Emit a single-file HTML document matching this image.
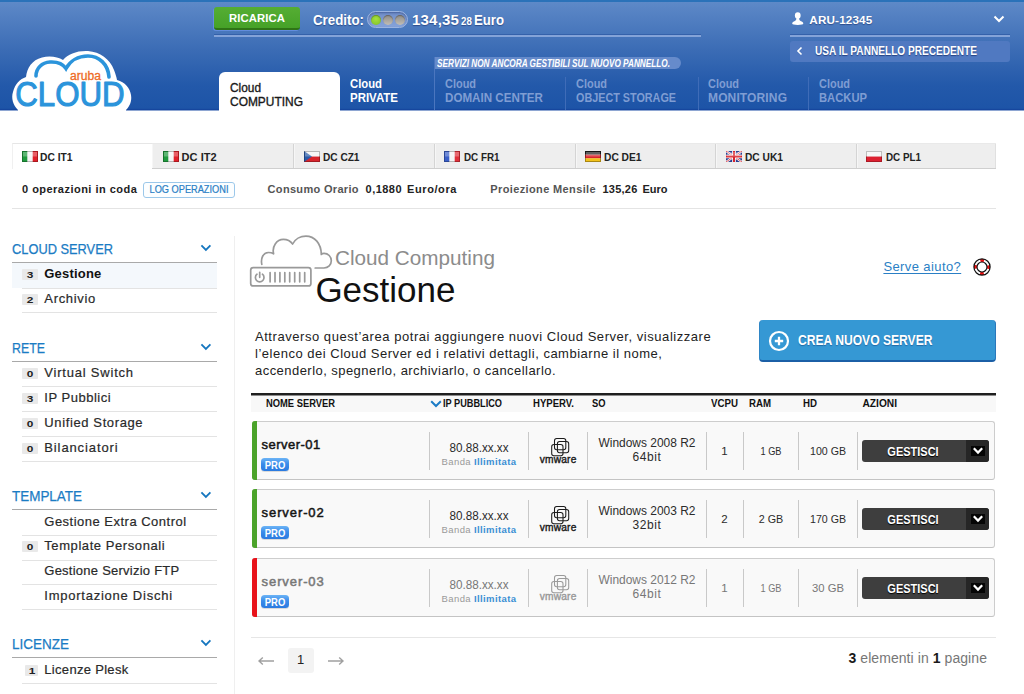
<!DOCTYPE html>
<html lang="it">
<head>
<meta charset="utf-8">
<title>Aruba Cloud - Gestione</title>
<style>
*{box-sizing:border-box;margin:0;padding:0}
html,body{width:1024px;height:694px;overflow:hidden;background:#fff}
body{font-family:"Liberation Sans",sans-serif;color:#222;position:relative}
.t{position:absolute;white-space:nowrap}
.a,svg{position:absolute}
#hdr{left:0;top:0;width:1024px;height:110px;background:linear-gradient(#5f8bc9 0,#5985c5 8px,#3b6cb5 50px,#2359aa 85px,#1d54a7 108px,#1a4ea3 109px,#123f99 110px);border-bottom:0}
#hdrb{left:0;top:110px;width:1024px;height:1px;background:#8ea6d2}
#hdrtop{left:0;top:0;width:1024px;height:2px;background:#2a72b9}
.hline{height:2px;background:#84a3d8;box-shadow:0 -1px 0 rgba(20,60,140,.35)}
.vsep{top:77px;width:1px;height:33px;background:#3f6cb8}
b{font-weight:bold}
</style>
</head>
<body>
<div class="a" id="hdr"></div><div class="a" id="hdrtop"></div><div class="a" id="hdrb"></div>
<svg style="left:8px;top:46px" width="128" height="65" viewBox="8 46 128 65">
<path d="M18 110 C13 105 11 98 13 92 C15 84 20 79 26 77 C27 68 32 60 42 57.500 C50 55.500 58 57 63 60 C68 54 77 50.500 88 51 C100 52 110 59 114 70 C115.500 74 116.500 77 117 80 C125 82 130 88 131 95 C132 101 130 106 126 110 L126 111 L18 111 Z" fill="#fff"/>
<path d="M36 76 C36 68 42 62.500 50 62 C57 61.600 63 64 66 68.500 C70 61 78 56 88 56 C99 56 108 64 109 77" fill="none" stroke="#2b94db" stroke-width="3.600" stroke-linecap="round"/>
<text x="70" y="80" font-family="Liberation Sans, sans-serif" font-size="12" fill="#ee6b25" stroke="#ee6b25" stroke-width="0.300" textLength="31" lengthAdjust="spacingAndGlyphs">aruba</text>
<text x="15.200" y="106" font-family="Liberation Sans, sans-serif" font-size="35" fill="#2b94db" stroke="#2b94db" stroke-width="1.100" stroke-linejoin="round" textLength="109.500" lengthAdjust="spacingAndGlyphs">CLOUD</text>
</svg>
<div class="a" style="left:214px;top:7px;width:86px;height:23px;background:linear-gradient(#55ad33,#46a228);border-radius:3px;border-bottom:2px solid #2f7416;box-shadow:-1px 1px 0 rgba(110,150,235,.7)"></div>
<div class="t" style="top:11.00px;font-size:11.3px;line-height:14px;color:#fff;font-weight:bold;letter-spacing:0.107px;left:-43.00px;width:600px;text-align:center;"><span>RICARICA</span></div>
<div class="t" style="top:11.00px;font-size:14px;line-height:18px;color:#fff;font-weight:bold;transform:scaleX(0.9502);transform-origin:0 0;left:313.00px;text-shadow:0 1px 1px rgba(10,30,90,.5);"><span>Credito:</span></div>
<div class="a" style="left:367px;top:11px;width:41px;height:17px;border-radius:9px;background:linear-gradient(#6f8dc8,#86a3da);border:1px solid #9bb4e1;box-shadow:inset 0 1px 2px rgba(20,40,100,.45)"></div>
<div class="a" style="left:370.5px;top:14.500px;width:10.400px;height:10.400px;border-radius:50%;background:radial-gradient(circle at 50% 40%,#a6e03c,#7fbf2a);box-shadow:inset 0 1px 1px rgba(0,0,0,.3)"></div>
<div class="a" style="left:382.8px;top:14.500px;width:10.400px;height:10.400px;border-radius:50%;background:linear-gradient(#8e8b86,#c2beb6);box-shadow:inset 0 1px 1px rgba(0,0,0,.3)"></div>
<div class="a" style="left:395.1px;top:14.500px;width:10.400px;height:10.400px;border-radius:50%;background:linear-gradient(#8e8b86,#c2beb6);box-shadow:inset 0 1px 1px rgba(0,0,0,.3)"></div>
<div class="t" style="top:10.00px;font-size:15px;line-height:19px;color:#fff;font-weight:bold;letter-spacing:0.217px;left:412.00px;text-shadow:0 1px 1px rgba(10,30,90,.5);"><span>134,35</span></div>
<div class="t" style="top:15.00px;font-size:10px;line-height:13px;color:#fff;font-weight:bold;transform:scaleX(0.9708);transform-origin:0 0;left:460.80px;text-shadow:0 1px 1px rgba(10,30,90,.5);"><span>28</span></div>
<div class="t" style="top:11.00px;font-size:14px;line-height:18px;color:#fff;font-weight:bold;transform:scaleX(0.9407);transform-origin:0 0;left:474.00px;text-shadow:0 1px 1px rgba(10,30,90,.5);"><span>Euro</span></div>
<div class="a hline" style="left:214px;top:35px;width:487px"></div><div class="a hline" style="left:790px;top:35px;width:220px"></div>
<svg style="left:791px;top:11px" width="14" height="15" viewBox="791 11 14 15"><ellipse cx="797.750" cy="15.500" rx="2.850" ry="3.300" fill="#fff"/><path d="M796.500 17.800C796.500 20 795.500 20.800 793.800 21.500C792.600 22 792.200 22.800 792.200 23.600C792.200 24.600 794.500 25 797.750 25C801 25 803.300 24.600 803.300 23.600C803.300 22.800 802.900 22 801.700 21.500C800 20.800 799 20 799 17.800Z" fill="#fff"/></svg>
<div class="t" style="top:12.00px;font-size:11.7px;line-height:15px;color:#fff;font-weight:bold;letter-spacing:0.157px;left:809.30px;text-shadow:0 1px 1px rgba(10,30,90,.5);"><span>ARU-12345</span></div>
<svg style="left:993px;top:15px" width="12" height="8" viewBox="0 0 12 8"><path d="M1.500 1.500L6 6l4.500-4.500" fill="none" stroke="#fff" stroke-width="2"/></svg>
<div class="a" style="left:790px;top:41px;width:220px;height:21px;background:#5079c1;border-radius:3px"></div>
<svg style="left:796px;top:46px" width="8" height="10" viewBox="0 0 8 10"><path d="M5.500 1.500L2 5l3.500 3.500" fill="none" stroke="#fff" stroke-width="1.600"/></svg>
<div class="t" style="top:43.00px;font-size:12px;line-height:16px;color:#fff;font-weight:bold;transform:scaleX(0.8417);transform-origin:0 0;left:815.00px;text-shadow:0 1px 1px rgba(10,30,90,.6);"><span>USA IL PANNELLO PRECEDENTE</span></div>
<div class="a" style="left:434px;top:57px;width:1px;height:53px;background:#4b76bf"></div>
<div class="a" style="left:435px;top:57px;width:246px;height:12px;border-radius:0 6px 6px 0;background:#668bcb"></div>
<div class="t" style="top:57.00px;font-size:10.3px;line-height:13px;color:#fff;font-weight:bold;transform:scaleX(0.7986);transform-origin:0 0;left:437.40px;font-style:italic;"><span>SERVIZI NON ANCORA GESTIBILI SUL NUOVO PANNELLO.</span></div>
<div class="a" style="left:219px;top:72px;width:121px;height:39px;background:#fff;border-radius:6px 6px 0 0"></div>
<div class="t" style="top:80.00px;font-size:12px;line-height:16px;color:#1a1a1a;transform:scaleX(0.9885);transform-origin:0 0;left:230.00px;-webkit-text-stroke:0.35px #1a1a1a;"><span>Cloud</span></div>
<div class="t" style="top:94.00px;font-size:12px;line-height:16px;color:#1a1a1a;transform:scaleX(0.9953);transform-origin:0 0;left:230.00px;-webkit-text-stroke:0.35px #1a1a1a;"><span>COMPUTING</span></div>
<div class="t" style="top:76.00px;font-size:12px;line-height:16px;color:#fff;font-weight:bold;transform:scaleX(0.9412);transform-origin:0 0;left:350.00px;"><span>Cloud</span></div>
<div class="t" style="top:90.00px;font-size:12px;line-height:16px;color:#fff;font-weight:bold;transform:scaleX(0.9555);transform-origin:0 0;left:350.00px;"><span>PRIVATE</span></div>
<div class="t" style="top:76.00px;font-size:12px;line-height:16px;color:#7f9dd3;font-weight:bold;transform:scaleX(0.9118);transform-origin:0 0;left:445.00px;"><span>Cloud</span></div>
<div class="t" style="top:90.00px;font-size:12px;line-height:16px;color:#7f9dd3;font-weight:bold;transform:scaleX(0.9670);transform-origin:0 0;left:445.00px;"><span>DOMAIN CENTER</span></div>
<div class="t" style="top:76.00px;font-size:12px;line-height:16px;color:#7f9dd3;font-weight:bold;transform:scaleX(0.9118);transform-origin:0 0;left:576.00px;"><span>Cloud</span></div>
<div class="t" style="top:90.00px;font-size:12px;line-height:16px;color:#7f9dd3;font-weight:bold;transform:scaleX(0.8998);transform-origin:0 0;left:576.00px;"><span>OBJECT STORAGE</span></div>
<div class="t" style="top:76.00px;font-size:12px;line-height:16px;color:#7f9dd3;font-weight:bold;transform:scaleX(0.9118);transform-origin:0 0;left:708.00px;"><span>Cloud</span></div>
<div class="t" style="top:90.00px;font-size:12px;line-height:16px;color:#7f9dd3;font-weight:bold;letter-spacing:0.133px;left:708.00px;"><span>MONITORING</span></div>
<div class="t" style="top:76.00px;font-size:12px;line-height:16px;color:#7f9dd3;font-weight:bold;transform:scaleX(0.9118);transform-origin:0 0;left:819.00px;"><span>Cloud</span></div>
<div class="t" style="top:90.00px;font-size:12px;line-height:16px;color:#7f9dd3;font-weight:bold;transform:scaleX(0.9349);transform-origin:0 0;left:819.00px;"><span>BACKUP</span></div>
<div class="a vsep" style="left:565px"></div>
<div class="a vsep" style="left:698px"></div>
<div class="a vsep" style="left:808px"></div>
<div class="a" style="left:12px;top:143px;width:984px;height:26px;background:#eeeeee;border-bottom:1px solid #cfcfcf;border-top:1px solid #e9e9e9"></div>
<div class="a" style="left:12px;top:143px;width:140px;height:26px;background:#fff;border-top:1px solid #e6e6e6;border-left:1px solid #f0f0f0"></div>
<div class="a" style="left:152px;top:144px;width:1px;height:24px;background:#f6f6f6"></div>
<div class="a" style="left:293px;top:144px;width:2px;height:24px;background:linear-gradient(90deg,#d4d4d4 50%,#f6f6f6 50%)"></div>
<div class="a" style="left:434px;top:144px;width:2px;height:24px;background:linear-gradient(90deg,#d4d4d4 50%,#f6f6f6 50%)"></div>
<div class="a" style="left:575px;top:144px;width:2px;height:24px;background:linear-gradient(90deg,#d4d4d4 50%,#f6f6f6 50%)"></div>
<div class="a" style="left:715px;top:144px;width:2px;height:24px;background:linear-gradient(90deg,#d4d4d4 50%,#f6f6f6 50%)"></div>
<div class="a" style="left:856px;top:144px;width:2px;height:24px;background:linear-gradient(90deg,#d4d4d4 50%,#f6f6f6 50%)"></div>
<div class="a" style="left:995px;top:144px;width:1px;height:24px;background:#e0e0e0"></div>
<svg style="left:22px;top:151px" width="16" height="11" viewBox="0 0 16 11"><rect width="16" height="11" fill="#f4f4f4"/><rect width="5.300" height="11" fill="#1f9a3d"/><rect x="10.700" width="5.300" height="11" fill="#e0202a"/><rect x=".5" y=".5" width="15" height="10" fill="none" stroke="rgba(0,0,0,.25)"/><rect x="1" y="1" width="14" height="4.500" fill="#fff" opacity=".28"/></svg>
<div class="t" style="top:150.00px;font-size:11px;line-height:14px;color:#222;font-weight:bold;transform:scaleX(0.9327);transform-origin:0 0;left:39.50px;"><span>DC IT1</span></div>
<svg style="left:163px;top:151px" width="16" height="11" viewBox="0 0 16 11"><rect width="16" height="11" fill="#f4f4f4"/><rect width="5.300" height="11" fill="#1f9a3d"/><rect x="10.700" width="5.300" height="11" fill="#e0202a"/><rect x=".5" y=".5" width="15" height="10" fill="none" stroke="rgba(0,0,0,.25)"/><rect x="1" y="1" width="14" height="4.500" fill="#fff" opacity=".28"/></svg>
<div class="t" style="top:150.00px;font-size:11px;line-height:14px;color:#222;font-weight:bold;letter-spacing:0.031px;left:181.60px;"><span>DC IT2</span></div>
<svg style="left:304px;top:151px" width="16" height="11" viewBox="0 0 16 11"><rect width="16" height="5.500" fill="#f4f4f4"/><rect y="5.500" width="16" height="5.500" fill="#d8242c"/><path d="M0 0L8 5.500L0 11Z" fill="#2a5aa8"/><rect x=".5" y=".5" width="15" height="10" fill="none" stroke="rgba(0,0,0,.25)"/><rect x="1" y="1" width="14" height="4.500" fill="#fff" opacity=".28"/></svg>
<div class="t" style="top:150.00px;font-size:11px;line-height:14px;color:#222;font-weight:bold;transform:scaleX(0.9186);transform-origin:0 0;left:322.60px;"><span>DC CZ1</span></div>
<svg style="left:444px;top:151px" width="16" height="11" viewBox="0 0 16 11"><rect width="16" height="11" fill="#f4f4f4"/><rect width="5.300" height="11" fill="#3a5fc8"/><rect x="10.700" width="5.300" height="11" fill="#e0303a"/><rect x=".5" y=".5" width="15" height="10" fill="none" stroke="rgba(0,0,0,.25)"/><rect x="1" y="1" width="14" height="4.500" fill="#fff" opacity=".28"/></svg>
<div class="t" style="top:150.00px;font-size:11px;line-height:14px;color:#222;font-weight:bold;transform:scaleX(0.8934);transform-origin:0 0;left:463.60px;"><span>DC FR1</span></div>
<svg style="left:585px;top:151px" width="16" height="11" viewBox="0 0 16 11"><rect width="16" height="3.700" fill="#222"/><rect y="3.700" width="16" height="3.700" fill="#d8242c"/><rect y="7.300" width="16" height="3.700" fill="#f2c21a"/><rect x=".5" y=".5" width="15" height="10" fill="none" stroke="rgba(0,0,0,.3)"/><rect x="1" y="1" width="14" height="4.500" fill="#fff" opacity=".28"/></svg>
<div class="t" style="top:150.00px;font-size:11px;line-height:14px;color:#222;font-weight:bold;transform:scaleX(0.9295);transform-origin:0 0;left:604.10px;"><span>DC DE1</span></div>
<svg style="left:726px;top:151px" width="16" height="11" viewBox="0 0 16 11"><rect width="16" height="11" fill="#2a3f8f"/><path d="M0 0L16 11M16 0L0 11" stroke="#fff" stroke-width="2.200"/><path d="M0 0L16 11M16 0L0 11" stroke="#d8242c" stroke-width=".8"/><path d="M8 0V11M0 5.500H16" stroke="#fff" stroke-width="3.600"/><path d="M8 0V11M0 5.500H16" stroke="#d8242c" stroke-width="2"/><rect x="1" y="1" width="14" height="4.500" fill="#fff" opacity=".28"/></svg>
<div class="t" style="top:150.00px;font-size:11px;line-height:14px;color:#222;font-weight:bold;transform:scaleX(0.9279);transform-origin:0 0;left:744.60px;"><span>DC UK1</span></div>
<svg style="left:866px;top:151px" width="16" height="11" viewBox="0 0 16 11"><rect width="16" height="5.500" fill="#f4f4f4"/><rect y="5.500" width="16" height="5.500" fill="#dc2030"/><rect x=".5" y=".5" width="15" height="10" fill="none" stroke="rgba(0,0,0,.22)"/><rect x="1" y="1" width="14" height="4.500" fill="#fff" opacity=".28"/></svg>
<div class="t" style="top:150.00px;font-size:11px;line-height:14px;color:#222;font-weight:bold;transform:scaleX(0.8946);transform-origin:0 0;left:885.60px;"><span>DC PL1</span></div>
<div class="t" style="top:182.00px;font-size:11px;line-height:14px;color:#222;font-weight:bold;letter-spacing:0.477px;left:22.00px;"><span>0 operazioni in coda</span></div>
<div class="a" style="left:143px;top:182px;width:92px;height:16px;border:1px solid #9cc8ea;border-radius:3px;background:#fcfeff"></div>
<div class="t" style="top:183.00px;font-size:10px;line-height:13px;color:#2a7fc5;transform:scaleX(0.9231);transform-origin:50% 0;left:-111.00px;width:600px;text-align:center;-webkit-text-stroke:0.2px #2a7fc5;"><span>LOG OPERAZIONI</span></div>
<div class="t" style="top:182.00px;font-size:11px;line-height:14px;color:#555;font-weight:bold;letter-spacing:0.317px;left:267.60px;"><span>Consumo Orario</span></div>
<div class="t" style="top:182.00px;font-size:11px;line-height:14px;color:#222;font-weight:bold;letter-spacing:0.459px;left:365.60px;"><span>0,1880</span></div>
<div class="t" style="top:182.00px;font-size:11px;line-height:14px;color:#222;font-weight:bold;letter-spacing:0.597px;left:407.00px;"><span>Euro/ora</span></div>
<div class="t" style="top:182.00px;font-size:11px;line-height:14px;color:#555;font-weight:bold;letter-spacing:0.373px;left:490.30px;"><span>Proiezione Mensile</span></div>
<div class="t" style="top:182.00px;font-size:11px;line-height:14px;color:#222;font-weight:bold;letter-spacing:0.263px;left:602.40px;"><span>135,26</span></div>
<div class="t" style="top:182.00px;font-size:11px;line-height:14px;color:#222;font-weight:bold;left:642.50px;"><span>Euro</span></div>
<div class="a" style="left:12px;top:208px;width:984px;height:1px;background:#e4e4e4"></div>
<div class="a" style="left:234px;top:236px;width:1px;height:458px;background:#efefef"></div>
<div class="t" style="top:240.00px;font-size:14px;line-height:18px;color:#1b7cc4;transform:scaleX(0.9164);transform-origin:0 0;left:12.00px;-webkit-text-stroke:0.25px #1b7cc4;"><span>CLOUD SERVER</span></div>
<svg style="left:200px;top:244px" width="12" height="8" viewBox="0 0 12 8"><path d="M1.400 1.300L5.900 5.900l4.500-4.600" fill="none" stroke="#1576bf" stroke-width="1.800"/></svg>
<div class="a" style="left:12px;top:262px;width:205px;height:1px;background:#a9a9a9"></div>
<div class="a" style="left:12px;top:263px;width:205px;height:25px;background:#f4f8fc"></div>
<div class="a" style="left:22px;top:288px;width:195px;height:1px;background:#e3e3e3"></div>
<div class="a" style="left:22px;top:269px;width:16px;height:11px;background:#e9e9e9;border-radius:1px"></div>
<div class="t" style="top:268.00px;font-size:9.5px;line-height:13px;color:#222;font-weight:bold;left:-270.00px;width:600px;text-align:center;transform:scaleX(1.25);transform-origin:50% 0;"><span>3</span></div>
<div class="t" style="top:265.00px;font-size:13px;line-height:17px;color:#111;font-weight:bold;letter-spacing:0.193px;left:44.30px;"><span>Gestione</span></div>
<div class="a" style="left:22px;top:312px;width:195px;height:1px;background:#e3e3e3"></div>
<div class="a" style="left:22px;top:294px;width:16px;height:11px;background:#e9e9e9;border-radius:1px"></div>
<div class="t" style="top:293.00px;font-size:9.5px;line-height:13px;color:#222;font-weight:bold;left:-270.00px;width:600px;text-align:center;transform:scaleX(1.25);transform-origin:50% 0;"><span>2</span></div>
<div class="t" style="top:290.00px;font-size:13px;line-height:17px;color:#2a2a2a;letter-spacing:0.665px;left:44.30px;-webkit-text-stroke:0.2px #2a2a2a;"><span>Archivio</span></div>
<div class="t" style="top:339.00px;font-size:14px;line-height:18px;color:#1b7cc4;transform:scaleX(0.8837);transform-origin:0 0;left:12.00px;-webkit-text-stroke:0.25px #1b7cc4;"><span>RETE</span></div>
<svg style="left:200px;top:343px" width="12" height="8" viewBox="0 0 12 8"><path d="M1.400 1.300L5.900 5.900l4.500-4.600" fill="none" stroke="#1576bf" stroke-width="1.800"/></svg>
<div class="a" style="left:12px;top:361px;width:205px;height:1px;background:#a9a9a9"></div>
<div class="a" style="left:22px;top:386px;width:195px;height:1px;background:#e3e3e3"></div>
<div class="a" style="left:22px;top:368px;width:16px;height:11px;background:#e9e9e9;border-radius:1px"></div>
<div class="t" style="top:367.00px;font-size:9.5px;line-height:13px;color:#222;font-weight:bold;left:-270.00px;width:600px;text-align:center;transform:scaleX(1.25);transform-origin:50% 0;"><span>0</span></div>
<div class="t" style="top:364.00px;font-size:13px;line-height:17px;color:#2a2a2a;letter-spacing:0.790px;left:44.30px;-webkit-text-stroke:0.2px #2a2a2a;"><span>Virtual Switch</span></div>
<div class="a" style="left:22px;top:411px;width:195px;height:1px;background:#e3e3e3"></div>
<div class="a" style="left:22px;top:393px;width:16px;height:11px;background:#e9e9e9;border-radius:1px"></div>
<div class="t" style="top:392.00px;font-size:9.5px;line-height:13px;color:#222;font-weight:bold;left:-270.00px;width:600px;text-align:center;transform:scaleX(1.25);transform-origin:50% 0;"><span>3</span></div>
<div class="t" style="top:389.00px;font-size:13px;line-height:17px;color:#2a2a2a;letter-spacing:0.521px;left:44.30px;-webkit-text-stroke:0.2px #2a2a2a;"><span>IP Pubblici</span></div>
<div class="a" style="left:22px;top:436px;width:195px;height:1px;background:#e3e3e3"></div>
<div class="a" style="left:22px;top:418px;width:16px;height:11px;background:#e9e9e9;border-radius:1px"></div>
<div class="t" style="top:417.00px;font-size:9.5px;line-height:13px;color:#222;font-weight:bold;left:-270.00px;width:600px;text-align:center;transform:scaleX(1.25);transform-origin:50% 0;"><span>0</span></div>
<div class="t" style="top:414.00px;font-size:13px;line-height:17px;color:#2a2a2a;letter-spacing:0.621px;left:44.30px;-webkit-text-stroke:0.2px #2a2a2a;"><span>Unified Storage</span></div>
<div class="a" style="left:22px;top:461px;width:195px;height:1px;background:#e3e3e3"></div>
<div class="a" style="left:22px;top:443px;width:16px;height:11px;background:#e9e9e9;border-radius:1px"></div>
<div class="t" style="top:442.00px;font-size:9.5px;line-height:13px;color:#222;font-weight:bold;left:-270.00px;width:600px;text-align:center;transform:scaleX(1.25);transform-origin:50% 0;"><span>0</span></div>
<div class="t" style="top:439.00px;font-size:13px;line-height:17px;color:#2a2a2a;letter-spacing:0.883px;left:44.30px;-webkit-text-stroke:0.2px #2a2a2a;"><span>Bilanciatori</span></div>
<div class="t" style="top:487.00px;font-size:14px;line-height:18px;color:#1b7cc4;transform:scaleX(0.9605);transform-origin:0 0;left:12.00px;-webkit-text-stroke:0.25px #1b7cc4;"><span>TEMPLATE</span></div>
<svg style="left:200px;top:491px" width="12" height="8" viewBox="0 0 12 8"><path d="M1.400 1.300L5.900 5.900l4.500-4.600" fill="none" stroke="#1576bf" stroke-width="1.800"/></svg>
<div class="a" style="left:12px;top:509px;width:205px;height:1px;background:#a9a9a9"></div>
<div class="a" style="left:22px;top:535px;width:195px;height:1px;background:#e3e3e3"></div>
<div class="t" style="top:513.00px;font-size:13px;line-height:17px;color:#2a2a2a;letter-spacing:0.489px;left:44.30px;-webkit-text-stroke:0.2px #2a2a2a;"><span>Gestione Extra Control</span></div>
<div class="a" style="left:22px;top:560px;width:195px;height:1px;background:#e3e3e3"></div>
<div class="a" style="left:22px;top:541px;width:16px;height:11px;background:#e9e9e9;border-radius:1px"></div>
<div class="t" style="top:540.00px;font-size:9.5px;line-height:13px;color:#222;font-weight:bold;left:-270.00px;width:600px;text-align:center;transform:scaleX(1.25);transform-origin:50% 0;"><span>0</span></div>
<div class="t" style="top:537.00px;font-size:13px;line-height:17px;color:#2a2a2a;letter-spacing:0.573px;left:44.30px;-webkit-text-stroke:0.2px #2a2a2a;"><span>Template Personali</span></div>
<div class="a" style="left:22px;top:584px;width:195px;height:1px;background:#e3e3e3"></div>
<div class="t" style="top:562.00px;font-size:13px;line-height:17px;color:#2a2a2a;letter-spacing:0.243px;left:44.30px;-webkit-text-stroke:0.2px #2a2a2a;"><span>Gestione Servizio FTP</span></div>
<div class="a" style="left:22px;top:609px;width:195px;height:1px;background:#e3e3e3"></div>
<div class="t" style="top:587.00px;font-size:13px;line-height:17px;color:#2a2a2a;letter-spacing:0.754px;left:44.30px;-webkit-text-stroke:0.2px #2a2a2a;"><span>Importazione Dischi</span></div>
<div class="t" style="top:635.00px;font-size:14px;line-height:18px;color:#1b7cc4;transform:scaleX(0.9641);transform-origin:0 0;left:12.00px;-webkit-text-stroke:0.25px #1b7cc4;"><span>LICENZE</span></div>
<svg style="left:200px;top:639px" width="12" height="8" viewBox="0 0 12 8"><path d="M1.400 1.300L5.900 5.900l4.500-4.600" fill="none" stroke="#1576bf" stroke-width="1.800"/></svg>
<div class="a" style="left:12px;top:657px;width:205px;height:1px;background:#a9a9a9"></div>
<div class="a" style="left:22px;top:683px;width:195px;height:1px;background:#e3e3e3"></div>
<div class="a" style="left:25px;top:665px;width:13px;height:11px;background:#e9e9e9;border-radius:1px"></div>
<div class="t" style="top:664.00px;font-size:9.5px;line-height:13px;color:#222;font-weight:bold;left:-268.50px;width:600px;text-align:center;transform:scaleX(1.25);transform-origin:50% 0;"><span>1</span></div>
<div class="t" style="top:661.00px;font-size:13px;line-height:17px;color:#2a2a2a;letter-spacing:0.309px;left:44.30px;-webkit-text-stroke:0.2px #2a2a2a;"><span>Licenze Plesk</span></div>
<svg style="left:246px;top:232px" width="90" height="58" viewBox="246 232 90 58" fill="none" stroke="#999" stroke-width="1.700" stroke-linecap="round" stroke-linejoin="round">
<path d="M261.800 264.300C260.600 258.500 263 252.600 268.500 252.500C270.500 252.500 272.300 253 273.600 253.800C271.800 246.500 276.500 239.500 283.400 239.400C287.300 239.400 290.600 241.200 292.600 244C295 239 300.500 236.100 305.900 236.100C314.500 236.100 321.300 243.500 321.300 254.500C322 253.600 323 253.400 324 253.400C328.200 253.400 331.300 256.600 331.300 260.800C331.300 265 328.200 268 324 268L315.200 268"/>
<rect x="250.700" y="267.700" width="60.200" height="18.200" rx="2.500"/>
<path d="M257 274.200A4.300 4.300 0 1 0 262.400 274.200M259.700 272.300V277.300"/>
<path d="M270.100 272.500V281.800M275 272.500V281.800M279.900 272.500V281.800M284.800 272.500V281.800M289.700 272.500V281.800M294.700 272.500V281.800M299.700 272.500V281.800M304.700 272.500V281.800" stroke-width="1.700"/>
</svg>
<div class="t" style="top:245.00px;font-size:21px;line-height:25px;color:#8c8c8c;transform:scaleX(0.9860);transform-origin:0 0;left:334.60px;"><span>Cloud Computing</span></div>
<div class="t" style="top:269.00px;font-size:35px;line-height:41px;color:#111;left:315.40px;"><span>Gestione</span></div>
<div class="t" style="top:258.00px;font-size:13px;line-height:17px;color:#2a7fc5;letter-spacing:0.401px;left:883.40px;text-decoration:underline;text-underline-offset:2px;"><span>Serve aiuto?</span></div>
<svg style="left:971.500px;top:256.700px" width="20" height="20" viewBox="0 0 20 20"><circle cx="10" cy="10" r="6.600" fill="none" stroke="#fff" stroke-width="3"/><circle cx="10" cy="10" r="6.600" fill="none" stroke="#f01010" stroke-width="3" stroke-dasharray="3.800 6.567" stroke-dashoffset="1.900"/><circle cx="10" cy="10" r="8.100" fill="none" stroke="#111" stroke-width="1.200"/><circle cx="10" cy="10" r="5" fill="none" stroke="#111" stroke-width="1.200"/></svg>
<div class="t" style="top:328.00px;font-size:13px;line-height:17px;color:#222;letter-spacing:0.546px;left:255.00px;"><span>Attraverso quest’area potrai aggiungere nuovi Cloud Server, visualizzare</span></div>
<div class="t" style="top:345.00px;font-size:13px;line-height:17px;color:#222;letter-spacing:0.507px;left:255.00px;"><span>l’elenco dei Cloud Server ed i relativi dettagli, cambiarne il nome,</span></div>
<div class="t" style="top:362.00px;font-size:13px;line-height:17px;color:#222;letter-spacing:0.456px;left:255.00px;"><span>accenderlo, spegnerlo, archiviarlo, o cancellarlo.</span></div>
<div class="a" style="left:759px;top:320px;width:237px;height:42px;background:#3598d4;border-radius:4px;border-bottom:2px solid #1b5fa6;border-right:1px solid #2a78bb;border-left:1px solid #2f86c6"></div>
<svg style="left:768px;top:330px" width="22" height="22" viewBox="0 0 22 22"><circle cx="11" cy="11" r="9" fill="none" stroke="#fff" stroke-width="2.200"/><path d="M11 6.800V15.200M6.800 11H15.200" stroke="#fff" stroke-width="2.300"/></svg>
<div class="t" style="top:331.00px;font-size:14.5px;line-height:18px;color:#fff;font-weight:bold;transform:scaleX(0.8346);transform-origin:0 0;left:798.00px;text-shadow:0 1px 1px rgba(10,50,110,.45);"><span>CREA NUOVO SERVER</span></div>
<div class="a" style="left:251px;top:393px;width:745px;height:2px;background:#1f1f1f"></div>
<div class="a" style="left:251px;top:395px;width:745px;height:17px;background:linear-gradient(#8c8c8c 0,#8c8c8c 1px,#f8f8f8 1px)"></div>
<div class="t" style="top:397.00px;font-size:10.2px;line-height:13px;color:#111;font-weight:bold;transform:scaleX(0.9187);transform-origin:0 0;left:266.40px;"><span>NOME SERVER</span></div>
<svg style="left:430px;top:400px" width="12" height="8" viewBox="0 0 12 8"><path d="M1.200 1.200L6 6l4.800-4.800" fill="none" stroke="#1c7cc6" stroke-width="2"/></svg>
<div class="t" style="top:397.00px;font-size:10.2px;line-height:13px;color:#111;font-weight:bold;transform:scaleX(0.9010);transform-origin:0 0;left:442.80px;"><span>IP PUBBLICO</span></div>
<div class="t" style="top:397.00px;font-size:10.2px;line-height:13px;color:#111;font-weight:bold;transform:scaleX(0.9402);transform-origin:0 0;left:533.00px;"><span>HYPERV.</span></div>
<div class="t" style="top:397.00px;font-size:10.2px;line-height:13px;color:#111;font-weight:bold;transform:scaleX(0.9162);transform-origin:0 0;left:592.00px;"><span>SO</span></div>
<div class="t" style="top:397.00px;font-size:10.2px;line-height:13px;color:#111;font-weight:bold;transform:scaleX(0.9536);transform-origin:0 0;left:710.70px;"><span>VCPU</span></div>
<div class="t" style="top:397.00px;font-size:10.2px;line-height:13px;color:#111;font-weight:bold;transform:scaleX(0.9481);transform-origin:0 0;left:749.00px;"><span>RAM</span></div>
<div class="t" style="top:397.00px;font-size:10.2px;line-height:13px;color:#111;font-weight:bold;transform:scaleX(0.9512);transform-origin:0 0;left:803.00px;"><span>HD</span></div>
<div class="t" style="top:397.00px;font-size:10.2px;line-height:13px;color:#111;font-weight:bold;left:862.50px;"><span>AZIONI</span></div>
<div class="a" style="left:252px;top:421px;width:743px;height:59px;background:#f9f9f9;border:1px solid #cdcdcd;border-bottom-color:#c4c4c4;border-radius:3px"></div>
<div class="a" style="left:252px;top:421px;width:5px;height:59px;background:#4ba32a;border-radius:3px 0 0 3px"></div>
<div class="t" style="top:436.00px;font-size:13px;line-height:17px;color:#151515;letter-spacing:0.475px;left:261.60px;-webkit-text-stroke:0.5px #151515;"><span>server-01</span></div>
<div class="a" style="left:261px;top:458px;width:27.500px;height:13px;border-radius:3.500px;background:linear-gradient(#6cb4f6,#3b8cea 45%,#2a7ae0);box-shadow:0 1px 0 rgba(0,0,0,.12)"></div>
<div class="t" style="top:459.00px;font-size:10px;line-height:13px;color:#fff;font-weight:bold;transform:scaleX(0.9459);transform-origin:50% 0;left:-25.20px;width:600px;text-align:center;"><span>PRO</span></div>
<div class="a" style="left:429px;top:432px;width:1px;height:38px;background:#c9c9c9"></div>
<div class="a" style="left:528px;top:432px;width:1px;height:38px;background:#c9c9c9"></div>
<div class="a" style="left:587px;top:432px;width:1px;height:38px;background:#c9c9c9"></div>
<div class="a" style="left:706px;top:432px;width:1px;height:38px;background:#c9c9c9"></div>
<div class="a" style="left:743px;top:432px;width:1px;height:38px;background:#c9c9c9"></div>
<div class="a" style="left:798px;top:432px;width:1px;height:38px;background:#c9c9c9"></div>
<div class="a" style="left:857px;top:432px;width:1px;height:38px;background:#c9c9c9"></div>
<div class="t" style="top:440.00px;font-size:12px;line-height:16px;color:#2b2b2b;transform:scaleX(0.9719);transform-origin:50% 0;left:179.00px;width:600px;text-align:center;"><span>80.88.xx.xx</span></div>
<div class="t" style="top:455.00px;font-size:9.5px;line-height:13px;color:#9a9a9a;letter-spacing:0.381px;left:179.00px;width:600px;text-align:center;"><span>Banda <b style="color:#3a8fd4">Illimitata</b></span></div>
<svg style="left:548px;top:435px" width="24" height="24" viewBox="548 14 24 24" fill="none" stroke="#1c1c1c" stroke-width="1.050"><rect x="554.500" y="17.500" width="11.300" height="11.300" rx="2.200"/><rect x="557.400" y="20.500" width="11.300" height="11.300" rx="2.200"/><rect x="551.700" y="23.500" width="11.300" height="11.300" rx="2.200"/></svg>
<div class="t" style="top:453.00px;font-size:10.2px;line-height:13px;color:#1c1c1c;letter-spacing:0.162px;left:258.20px;width:600px;text-align:center;-webkit-text-stroke:0.4px #1c1c1c;"><span>vmware</span></div>
<div class="t" style="top:435.00px;font-size:12px;line-height:16px;color:#2b2b2b;transform:scaleX(0.9960);transform-origin:50% 0;left:346.80px;width:600px;text-align:center;"><span>Windows 2008 R2</span></div>
<div class="t" style="top:449.00px;font-size:12px;line-height:16px;color:#2b2b2b;letter-spacing:0.605px;left:347.00px;width:600px;text-align:center;"><span>64bit</span></div>
<div class="t" style="top:444.00px;font-size:11.5px;line-height:14px;color:#2b2b2b;left:424.50px;width:600px;text-align:center;"><span>1</span></div>
<div class="t" style="top:444.00px;font-size:11.5px;line-height:14px;color:#2b2b2b;transform:scaleX(0.8010);transform-origin:50% 0;left:471.00px;width:600px;text-align:center;"><span>1 GB</span></div>
<div class="t" style="top:444.00px;font-size:11.5px;line-height:14px;color:#2b2b2b;transform:scaleX(0.9231);transform-origin:50% 0;left:527.50px;width:600px;text-align:center;"><span>100 GB</span></div>
<div class="a" style="left:861.500px;top:440px;width:127.500px;height:22px;background:#3e3e3e;border-radius:3px"></div>
<div class="a" style="left:966px;top:440px;width:23px;height:22px;background:#262626;border-radius:0 3px 3px 0"></div>
<div class="a" style="left:971px;top:446px;width:14px;height:10px;background:#050505"></div>
<svg style="left:971px;top:446px" width="14" height="10" viewBox="0 0 14 10"><path d="M2.800 2.300L7 6.600L11.200 2.300" fill="none" stroke="#fff" stroke-width="2.200"/></svg>
<div class="t" style="top:444.00px;font-size:12px;line-height:16px;color:#fff;font-weight:bold;transform:scaleX(0.9158);transform-origin:50% 0;left:613.20px;width:600px;text-align:center;text-shadow:0 1px 1px #000;"><span>GESTISCI</span></div>
<div class="a" style="left:252px;top:489px;width:743px;height:59px;background:#f9f9f9;border:1px solid #cdcdcd;border-bottom-color:#c4c4c4;border-radius:3px"></div>
<div class="a" style="left:252px;top:489px;width:5px;height:59px;background:#4ba32a;border-radius:3px 0 0 3px"></div>
<div class="t" style="top:504.00px;font-size:13px;line-height:17px;color:#151515;letter-spacing:0.904px;left:261.60px;-webkit-text-stroke:0.5px #151515;"><span>server-02</span></div>
<div class="a" style="left:261px;top:526px;width:27.500px;height:13px;border-radius:3.500px;background:linear-gradient(#6cb4f6,#3b8cea 45%,#2a7ae0);box-shadow:0 1px 0 rgba(0,0,0,.12)"></div>
<div class="t" style="top:527.00px;font-size:10px;line-height:13px;color:#fff;font-weight:bold;transform:scaleX(0.9459);transform-origin:50% 0;left:-25.20px;width:600px;text-align:center;"><span>PRO</span></div>
<div class="a" style="left:429px;top:500px;width:1px;height:38px;background:#c9c9c9"></div>
<div class="a" style="left:528px;top:500px;width:1px;height:38px;background:#c9c9c9"></div>
<div class="a" style="left:587px;top:500px;width:1px;height:38px;background:#c9c9c9"></div>
<div class="a" style="left:706px;top:500px;width:1px;height:38px;background:#c9c9c9"></div>
<div class="a" style="left:743px;top:500px;width:1px;height:38px;background:#c9c9c9"></div>
<div class="a" style="left:798px;top:500px;width:1px;height:38px;background:#c9c9c9"></div>
<div class="a" style="left:857px;top:500px;width:1px;height:38px;background:#c9c9c9"></div>
<div class="t" style="top:508.00px;font-size:12px;line-height:16px;color:#2b2b2b;transform:scaleX(0.9719);transform-origin:50% 0;left:179.00px;width:600px;text-align:center;"><span>80.88.xx.xx</span></div>
<div class="t" style="top:523.00px;font-size:9.5px;line-height:13px;color:#9a9a9a;letter-spacing:0.381px;left:179.00px;width:600px;text-align:center;"><span>Banda <b style="color:#3a8fd4">Illimitata</b></span></div>
<svg style="left:548px;top:503px" width="24" height="24" viewBox="548 14 24 24" fill="none" stroke="#1c1c1c" stroke-width="1.050"><rect x="554.500" y="17.500" width="11.300" height="11.300" rx="2.200"/><rect x="557.400" y="20.500" width="11.300" height="11.300" rx="2.200"/><rect x="551.700" y="23.500" width="11.300" height="11.300" rx="2.200"/></svg>
<div class="t" style="top:521.00px;font-size:10.2px;line-height:13px;color:#1c1c1c;letter-spacing:0.162px;left:258.20px;width:600px;text-align:center;-webkit-text-stroke:0.4px #1c1c1c;"><span>vmware</span></div>
<div class="t" style="top:503.00px;font-size:12px;line-height:16px;color:#2b2b2b;transform:scaleX(0.9960);transform-origin:50% 0;left:346.80px;width:600px;text-align:center;"><span>Windows 2003 R2</span></div>
<div class="t" style="top:517.00px;font-size:12px;line-height:16px;color:#2b2b2b;letter-spacing:0.605px;left:347.00px;width:600px;text-align:center;"><span>32bit</span></div>
<div class="t" style="top:512.00px;font-size:11.5px;line-height:14px;color:#2b2b2b;left:424.50px;width:600px;text-align:center;"><span>2</span></div>
<div class="t" style="top:512.00px;font-size:11.5px;line-height:14px;color:#2b2b2b;transform:scaleX(0.9344);transform-origin:50% 0;left:471.00px;width:600px;text-align:center;"><span>2 GB</span></div>
<div class="t" style="top:512.00px;font-size:11.5px;line-height:14px;color:#2b2b2b;transform:scaleX(0.9231);transform-origin:50% 0;left:527.50px;width:600px;text-align:center;"><span>170 GB</span></div>
<div class="a" style="left:861.500px;top:508px;width:127.500px;height:22px;background:#3e3e3e;border-radius:3px"></div>
<div class="a" style="left:966px;top:508px;width:23px;height:22px;background:#262626;border-radius:0 3px 3px 0"></div>
<div class="a" style="left:971px;top:514px;width:14px;height:10px;background:#050505"></div>
<svg style="left:971px;top:514px" width="14" height="10" viewBox="0 0 14 10"><path d="M2.800 2.300L7 6.600L11.200 2.300" fill="none" stroke="#fff" stroke-width="2.200"/></svg>
<div class="t" style="top:512.00px;font-size:12px;line-height:16px;color:#fff;font-weight:bold;transform:scaleX(0.9158);transform-origin:50% 0;left:613.20px;width:600px;text-align:center;text-shadow:0 1px 1px #000;"><span>GESTISCI</span></div>
<div class="a" style="left:252px;top:558px;width:743px;height:59px;background:#f9f9f9;border:1px solid #cdcdcd;border-bottom-color:#c4c4c4;border-radius:3px"></div>
<div class="a" style="left:252px;top:558px;width:5px;height:59px;background:#e8121a;border-radius:3px 0 0 3px"></div>
<div class="t" style="top:573.00px;font-size:13px;line-height:17px;color:#777;letter-spacing:0.904px;left:261.60px;-webkit-text-stroke:0.5px #777;"><span>server-03</span></div>
<div class="a" style="left:261px;top:595px;width:27.500px;height:13px;border-radius:3.500px;background:linear-gradient(#6cb4f6,#3b8cea 45%,#2a7ae0);box-shadow:0 1px 0 rgba(0,0,0,.12)"></div>
<div class="t" style="top:596.00px;font-size:10px;line-height:13px;color:#fff;font-weight:bold;transform:scaleX(0.9459);transform-origin:50% 0;left:-25.20px;width:600px;text-align:center;"><span>PRO</span></div>
<div class="a" style="left:429px;top:569px;width:1px;height:38px;background:#c9c9c9"></div>
<div class="a" style="left:528px;top:569px;width:1px;height:38px;background:#c9c9c9"></div>
<div class="a" style="left:587px;top:569px;width:1px;height:38px;background:#c9c9c9"></div>
<div class="a" style="left:706px;top:569px;width:1px;height:38px;background:#c9c9c9"></div>
<div class="a" style="left:743px;top:569px;width:1px;height:38px;background:#c9c9c9"></div>
<div class="a" style="left:798px;top:569px;width:1px;height:38px;background:#c9c9c9"></div>
<div class="a" style="left:857px;top:569px;width:1px;height:38px;background:#c9c9c9"></div>
<div class="t" style="top:577.00px;font-size:12px;line-height:16px;color:#777;transform:scaleX(0.9719);transform-origin:50% 0;left:179.00px;width:600px;text-align:center;"><span>80.88.xx.xx</span></div>
<div class="t" style="top:592.00px;font-size:9.5px;line-height:13px;color:#9a9a9a;letter-spacing:0.381px;left:179.00px;width:600px;text-align:center;"><span>Banda <b style="color:#3a8fd4">Illimitata</b></span></div>
<svg style="left:548px;top:572px" width="24" height="24" viewBox="548 14 24 24" fill="none" stroke="#9a9a9a" stroke-width="1.050"><rect x="554.500" y="17.500" width="11.300" height="11.300" rx="2.200"/><rect x="557.400" y="20.500" width="11.300" height="11.300" rx="2.200"/><rect x="551.700" y="23.500" width="11.300" height="11.300" rx="2.200"/></svg>
<div class="t" style="top:590.00px;font-size:10.2px;line-height:13px;color:#9a9a9a;letter-spacing:0.162px;left:258.20px;width:600px;text-align:center;-webkit-text-stroke:0.4px #9a9a9a;"><span>vmware</span></div>
<div class="t" style="top:572.00px;font-size:12px;line-height:16px;color:#777;transform:scaleX(0.9960);transform-origin:50% 0;left:346.80px;width:600px;text-align:center;"><span>Windows 2012 R2</span></div>
<div class="t" style="top:586.00px;font-size:12px;line-height:16px;color:#777;letter-spacing:0.605px;left:347.00px;width:600px;text-align:center;"><span>64bit</span></div>
<div class="t" style="top:581.00px;font-size:11.5px;line-height:14px;color:#777;left:424.50px;width:600px;text-align:center;"><span>1</span></div>
<div class="t" style="top:581.00px;font-size:11.5px;line-height:14px;color:#777;transform:scaleX(0.8010);transform-origin:50% 0;left:471.00px;width:600px;text-align:center;"><span>1 GB</span></div>
<div class="t" style="top:581.00px;font-size:11.5px;line-height:14px;color:#777;transform:scaleX(0.9813);transform-origin:50% 0;left:527.50px;width:600px;text-align:center;"><span>30 GB</span></div>
<div class="a" style="left:861.500px;top:577px;width:127.500px;height:22px;background:#3e3e3e;border-radius:3px"></div>
<div class="a" style="left:966px;top:577px;width:23px;height:22px;background:#262626;border-radius:0 3px 3px 0"></div>
<div class="a" style="left:971px;top:583px;width:14px;height:10px;background:#050505"></div>
<svg style="left:971px;top:583px" width="14" height="10" viewBox="0 0 14 10"><path d="M2.800 2.300L7 6.600L11.200 2.300" fill="none" stroke="#fff" stroke-width="2.200"/></svg>
<div class="t" style="top:581.00px;font-size:12px;line-height:16px;color:#fff;font-weight:bold;transform:scaleX(0.9158);transform-origin:50% 0;left:613.20px;width:600px;text-align:center;text-shadow:0 1px 1px #000;"><span>GESTISCI</span></div>
<div class="a" style="left:251px;top:637px;width:745px;height:1px;background:#e6e6e6"></div>
<svg style="left:257px;top:655px" width="18" height="12" viewBox="0 0 18 12"><path d="M17 6H2M5.800 2.400L2 6L5.800 9.600" fill="none" stroke="#a0a0a0" stroke-width="1.400"/></svg>
<div class="a" style="left:288px;top:648px;width:26px;height:25px;background:#f3f3f3;border-radius:3px"></div>
<div class="t" style="top:651.00px;font-size:13px;line-height:17px;color:#222;left:0.50px;width:600px;text-align:center;"><span>1</span></div>
<svg style="left:327px;top:655px" width="18" height="12" viewBox="0 0 18 12"><path d="M1 6H16M12.200 2.400L16 6L12.200 9.600" fill="none" stroke="#a0a0a0" stroke-width="1.400"/></svg>
<div class="t" style="top:649.00px;font-size:14px;line-height:18px;color:#777;letter-spacing:0.069px;left:387.00px;width:600px;text-align:right;"><span><b style="color:#1a1a1a">3</b> elementi in <b style="color:#1a1a1a">1</b> pagine</span></div>
</body>
</html>
